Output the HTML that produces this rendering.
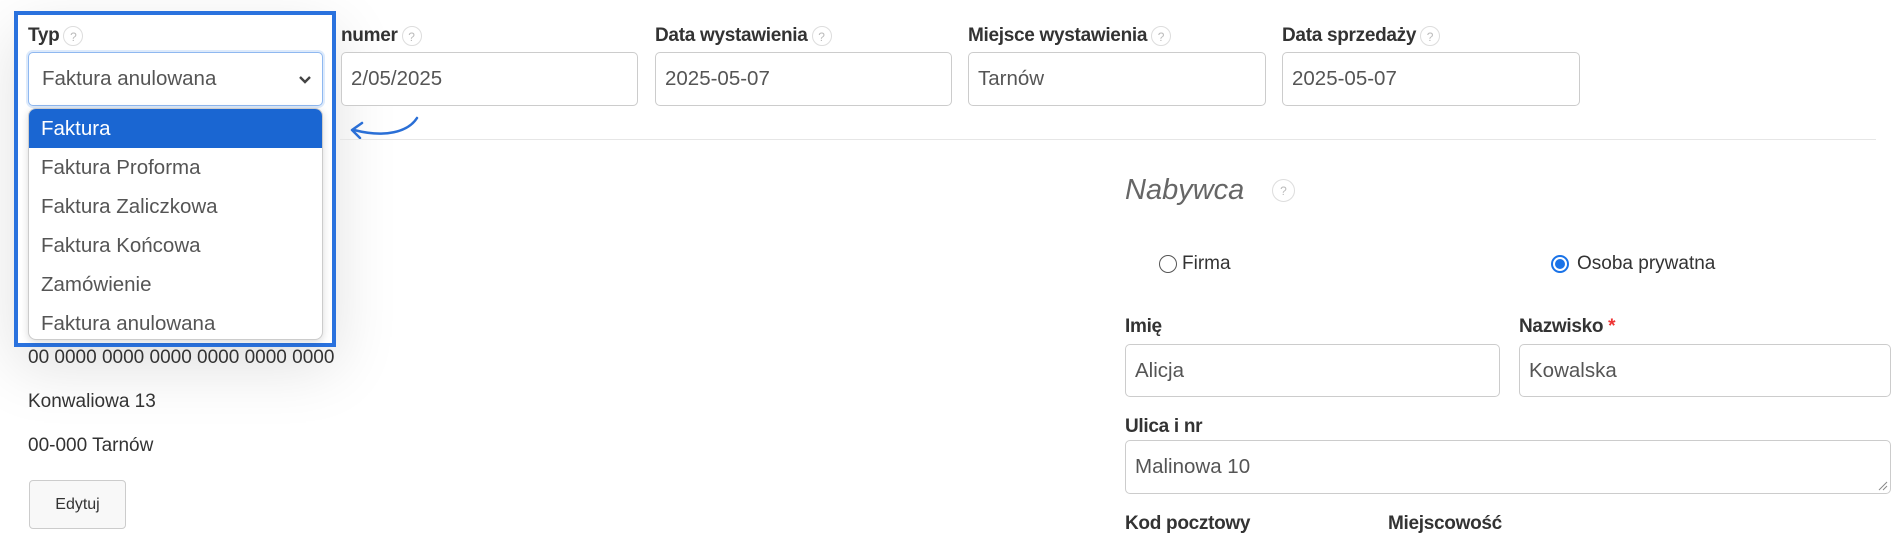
<!DOCTYPE html>
<html><head><meta charset="utf-8"><style>
body{margin:0;width:1897px;height:544px;background:#fff;position:relative;overflow:hidden;font-family:"Liberation Sans",Arial,sans-serif;color:#333}
.a{position:absolute}
.lbl{position:absolute;font-weight:bold;font-size:19px;color:#333;line-height:22px;letter-spacing:-0.3px}
.q{display:inline-block;width:20px;height:20px;border:1px solid #ddd;border-radius:50%;color:#bbb;font-size:12px;font-weight:normal;text-align:center;line-height:20px;vertical-align:middle;margin-left:4px;box-sizing:border-box;letter-spacing:0}
.inp{position:absolute;border:1px solid #ccc;border-radius:5px;box-sizing:border-box;font-size:20.5px;color:#555;padding-left:9px;display:flex;align-items:center;background:#fff}
.txt{position:absolute;font-size:19px;color:#333}
.item{height:39px;line-height:39px;padding-left:12px;font-size:20.5px;color:#555}
</style></head><body>
<div class="a" style="left:14px;top:11px;width:322px;height:336px;border:4px solid #2a72de;box-sizing:border-box;box-shadow:0 20px 60px rgba(0,0,0,.12)"></div>
<div class="lbl" style="left:28px;top:25px">Typ<span class="q">?</span></div>
<div class="inp" style="left:28px;top:52px;width:295px;height:54px;border-color:#8fb8f0;box-shadow:0 0 0 2px rgba(120,170,240,.25);padding-left:13px">Faktura anulowana
<svg style="position:absolute;right:10px;top:22px" width="14" height="10" viewBox="0 0 14 10"><path d="M2 2l5 5 5-5" fill="none" stroke="#444" stroke-width="2.4"/></svg></div>
<div class="a" style="left:28px;top:108px;width:295px;height:232px;background:#fff;border:1px solid #ccc;border-radius:8px;box-sizing:border-box;overflow:hidden;box-shadow:0 2px 8px rgba(0,0,0,.15)">
<div class="item" style="background:#1a66d2;color:#fff">Faktura</div>
<div class="item">Faktura Proforma</div>
<div class="item">Faktura Zaliczkowa</div>
<div class="item">Faktura Końcowa</div>
<div class="item">Zamówienie</div>
<div class="item">Faktura anulowana</div>
</div>
<svg class="a" style="left:340px;top:112px" width="90" height="36" viewBox="0 0 90 36"><path d="M77 6C68 20 45 26 14 18" fill="none" stroke="#2a6fd6" stroke-width="2.5" stroke-linecap="round"/><path d="M22 11L12 18 20 26" fill="none" stroke="#2a6fd6" stroke-width="2.5" stroke-linecap="round" stroke-linejoin="round"/></svg>

<div class="lbl" style="left:341px;top:25px">numer<span class="q">?</span></div>
<div class="inp" style="left:341px;top:52px;width:297px;height:54px">2/05/2025</div>
<div class="lbl" style="left:655px;top:25px">Data wystawienia<span class="q">?</span></div>
<div class="inp" style="left:655px;top:52px;width:297px;height:54px">2025-05-07</div>
<div class="lbl" style="left:968px;top:25px">Miejsce wystawienia<span class="q">?</span></div>
<div class="inp" style="left:968px;top:52px;width:298px;height:54px">Tarnów</div>
<div class="lbl" style="left:1282px;top:25px">Data sprzedaży<span class="q">?</span></div>
<div class="inp" style="left:1282px;top:52px;width:298px;height:54px">2025-05-07</div>
<div class="a" style="left:340px;top:139px;width:1536px;height:1px;background:#e6e6e6"></div>

<div class="a" style="left:1125px;top:174px;font-size:29px;font-style:italic;color:#666">Nabywca</div>
<div class="a" style="left:1272px;top:179px"><span class="q" style="width:23px;height:23px;line-height:23px;margin:0">?</span></div>
<div class="a" style="left:1159px;top:255px;width:18px;height:18px;border:1.5px solid #555;border-radius:50%;box-sizing:border-box"></div>
<div class="txt" style="left:1182px;top:253px">Firma</div>
<div class="a" style="left:1551px;top:255px;width:18px;height:18px;border:2px solid #1a73e8;border-radius:50%;box-sizing:border-box;background:#fff"><div style="width:10px;height:10px;margin:2px;border-radius:50%;background:#1a73e8"></div></div>
<div class="txt" style="left:1577px;top:253px">Osoba prywatna</div>
<div class="lbl" style="left:1125px;top:316px">Imię</div>
<div class="inp" style="left:1125px;top:344px;width:375px;height:53px">Alicja</div>
<div class="lbl" style="left:1519px;top:316px">Nazwisko <span style="color:#e33">*</span></div>
<div class="inp" style="left:1519px;top:344px;width:372px;height:53px">Kowalska</div>
<div class="lbl" style="left:1125px;top:416px">Ulica i nr</div>
<div class="inp" style="left:1125px;top:440px;width:766px;height:54px">Malinowa 10
<svg style="position:absolute;right:2px;bottom:2px" width="10" height="10"><path d="M9 1L1 9M9 5L5 9" stroke="#888" stroke-width="1"/></svg></div>
<div class="lbl" style="left:1125px;top:513px">Kod pocztowy</div>
<div class="lbl" style="left:1388px;top:513px">Miejscowość</div>

<div class="txt" style="left:28px;top:347px">00 0000 0000 0000 0000 0000 0000</div>
<div class="txt" style="left:28px;top:391px">Konwaliowa 13</div>
<div class="txt" style="left:28px;top:435px">00-000 Tarnów</div>
<div class="a" style="left:29px;top:480px;width:97px;height:49px;border:1px solid #ccc;border-radius:4px;box-sizing:border-box;background:#f8f8f8;font-size:16px;text-align:center;line-height:47px;color:#333">Edytuj</div>
</body></html>
